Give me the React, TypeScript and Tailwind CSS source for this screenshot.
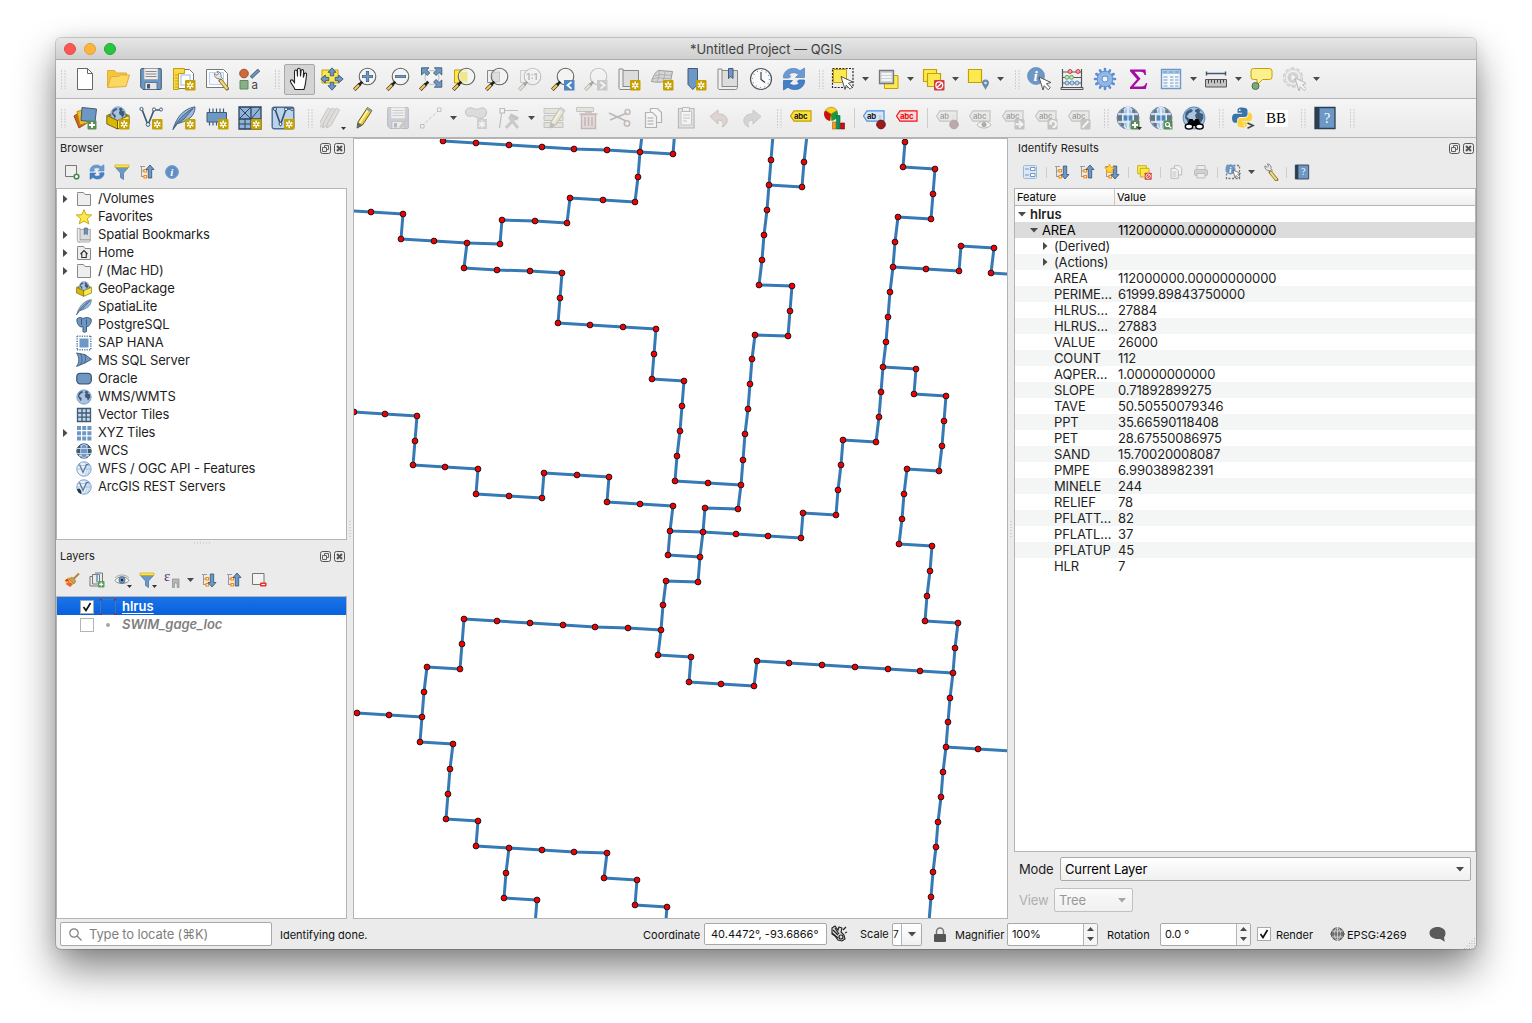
import React from "react";

type IconProps = { s?: number; children?: React.ReactNode; dim?: boolean; vb?: string };

const Svg = ({ s = 24, children, dim, vb = "0 0 24 24" }: IconProps) => (
  <svg width={s} height={s} viewBox={vb} fill="none" className={dim ? "shrink-0 opacity-35 grayscale-[60%]" : "shrink-0"}>
    {children}
  </svg>
);

const B = "#6d97c4";
const D = "#415a75";

/* Small golden "new item" badge */
const NewBadge = () => (
  <g>
    <rect x="13" y="13" width="10.5" height="10.5" rx="1" fill="#c4a000" />
    <path d="M18.2 14.6v7.4M15 16.5l6.4 3.6M21.4 16.5L15 20.1" stroke="#fff" strokeWidth="1.5" />
    <circle cx="18.2" cy="18.3" r="1" fill="#c4a000" />
  </g>
);
const PlusBadge = () => (
  <g>
    <rect x="14.5" y="14.5" width="9" height="9" rx="1" fill="#5a8c5a" />
    <path d="M19 16v6M16 19h6" stroke="#fff" strokeWidth="1.8" />
  </g>
);
const Handle = () => (
  <g>
    <path d="M1.2 22.8L7 17" stroke="#3b3b3b" strokeWidth="3.600" />
    <path d="M1.500 22.500L6.200 17.800" stroke="#fcc93f" strokeWidth="2.200" />
    <path d="M6 18L9.300 14.700" stroke="#222" strokeWidth="2.600" />
  </g>
);
const Cursor = ({ t = "translate(11 10)" }: { t?: string }) => (
  <path transform={t} d="M0 0l12 5.500-4.600 1.200 3.800 4-2 2-4-4L4 13z" fill="#fff" stroke="#555" strokeWidth="1" />
);
const GlobeBase = ({ land = D }: { land?: string }) => (
  <g>
    <circle cx="12" cy="12" r="10.800" fill="#a9c4e2" stroke={B} strokeWidth="1.200" />
    <path d="M3.500 7c1.500-2 3.500-3.500 5.500-4l2 1.500-2 2-2 .5-1 2-1.500 1 1.500 2 2 1 .5 2-1 3c-1.500 0-2-2-2.500-3.500L3 12zM13 4l3-1.500 3 2.500-2 1 1.500 1 2.500 1 .5 4-2 3.500-1.500 2-1.500-3.500-2.500-1.500-1-3.500 2-2-2-1.500z" fill={land} />
  </g>
);
const WireGlobe = ({ s = 24, children }: { s?: number; children?: React.ReactNode }) => (
  <Svg s={s}>
    <circle cx="12" cy="12" r="11" fill="#6d97c4" stroke="#7c8a99" strokeWidth="1" />
    <ellipse cx="12" cy="12" rx="5.500" ry="11" fill="#a9c8ea" stroke="#e4eef8" strokeWidth="1.200" />
    <path d="M12 1v22M2 8h20M2 16h20" stroke="#e6eef7" strokeWidth="1.300" />
    <path d="M1.500 9.500h4.500v5H1.500zM18 9.500h4.500v5H18zM5 4h3v3H5zM16 4h3v3h-3zM5 17h3v3H5z" fill="#6a6a6a" opacity=".75" />
    <path d="M7.800 9.500h8.400v5H7.800z" fill="#4f86c0" />
    <path d="M12 1v22" stroke="#e6eef7" strokeWidth="1.200" />
    {children}
  </Svg>
);

const NewDoc = () => (
  <Svg><path d="M4.500 1.500h10l5 5v16h-15z" fill="#fff" stroke="#666" /><path d="M14.500 1.500v5h5" stroke="#666" /></Svg>
);
const Open = () => (
  <Svg>
    <path d="M1.500 20V3.500h7l2 2.500h10v4" fill="#f5c542" stroke="#dfae35" />
    <path d="M1.500 20.500L5 9.500h7.500l1.500-1.500h9.500L20 19.500z" fill="#fcd860" stroke="#dfae35" />
  </Svg>
);
const Save = ({ dim }: { dim?: boolean }) => (
  <Svg dim={dim}>
    <path d="M2.500 1.500h19a.8.8 0 01.8.8v19.400a.8.8 0 01-.8.8H4L1.700 20V2.300z" fill={B} stroke={D} />
    <path d="M5 1.500h14v11H5z" fill="#eee" stroke="#999" strokeWidth=".6" />
    <path d="M6.500 4.500h11M6.500 7h11M6.500 9.500h11" stroke="#888" />
    <path d="M6 15.500h12v7H6z" fill="#e6e6e6" stroke={D} strokeWidth=".7" /><path d="M8 17h3v4.500H8z" fill={D} />
    {dim && <path d="M14 22l7-9" stroke="#a77" strokeWidth="3" />}
  </Svg>
);
const NewLayout = () => (
  <Svg>
    <path d="M4 2.500h13.500l4 4v15H4z" fill="#fff" stroke="#777" />
    <path d="M9 8h9v10H9z" stroke="#b9cff0" strokeWidth="1.500" />
    <path d="M1.500 1.500h11v5h-6v16h-5z" fill="#f9d84f" stroke="#c4a000" />
    <path d="M3 8h3M3 11h3M3 14h3M3 17h3M3 20h3" stroke="#c4a000" strokeWidth=".9" />
    <NewBadge />
  </Svg>
);
const Wrench = () => (
  <g>
    <path d="M9.500 6.500a4 4 0 004.500 5l1.500 2 2-2-1.500-1.800a4 4 0 00-4-5.200l1.500 2.300-1.500 1.500z" fill="#e8e8e8" stroke="#777" strokeWidth=".9" />
    <path d="M15.500 13.500l6.500 8" stroke="#8a7530" strokeWidth="4" strokeLinecap="round" />
    <path d="M16 14l5.500 7" stroke="#f0d878" strokeWidth="2.400" strokeLinecap="round" />
  </g>
);
const LayoutMgr = () => (
  <Svg>
    <path d="M1.500 2.500h17l4 4v14h-21z" fill="#fff" stroke="#777" /><path d="M4.500 5.500h14v12h-14z" fill="#f5f9ff" stroke="#b9cff0" />
    <Wrench />
  </Svg>
);
const StyleMgr = () => (
  <Svg>
    <circle cx="6" cy="6.500" r="4.300" fill="#ce6a3b" stroke="#a04c22" />
    <path d="M13 10.500L21 3" stroke={D} strokeWidth="3.400" /><path d="M13.500 10L20.500 3.500" stroke={B} strokeWidth="2" />
    <path d="M2 13.500h8v8.500H2z" fill="#8aad8a" stroke="#5a8c5a" />
    <text x="13.500" y="21.500" fontSize="11.500" fill="#444" fontFamily="Inter">a</text>
  </Svg>
);
const Hand = () => (
  <Svg>
    <path d="M8 22.500c-1-3-3.500-5-4.500-8-.5-1.600 1.500-2.200 2.500-.8l1.500 2V4.500c0-2 2.500-2 2.700 0l.3 5V2.800c0-2 2.700-2 2.800 0l.2 6.700.6-5.700c.2-1.800 2.600-1.500 2.500.3l-.3 6.400 1-3.500c.5-1.600 2.600-1 2.300.7-.8 5-.6 9-2.600 14.800z" fill="#fff" stroke="#222" strokeWidth="1.100" />
  </Svg>
);
const PanSel = () => (
  <Svg>
    <path d="M2 3h16v13H2z" fill="#fce94f" stroke="#c4a000" />
    <g fill={B} stroke={D} strokeWidth=".9">
      <path d="M12 .8l4 4.500h-2.300v3.500h-3.400V5.300H8zM12 23.200l4-4.500h-2.300v-3.500h-3.400v3.500H8zM.8 12l4.500-4v2.300h3.500v3.400H5.300V16zM23.200 12l-4.500-4v2.300h-3.500v3.400h3.500V16z" />
    </g>
  </Svg>
);
const Lens = ({ children, r = 8.300 }: { children?: React.ReactNode; r?: number }) => (
  <g>
    <circle cx="14.500" cy="9.500" r={r} fill="#f4f4f2" fillOpacity=".85" stroke="#666" strokeWidth="1.100" />
    {children}
    <Handle />
  </g>
);
const ZoomIn = () => (<Svg><Lens><path d="M14.500 4v11M9 9.500h11" stroke={D} strokeWidth="3.200" /><path d="M14.500 4.500v10M9.500 9.500h10" stroke={B} strokeWidth="2" /></Lens></Svg>);
const ZoomOut = () => (<Svg><Lens><path d="M9 9.500h11" stroke={D} strokeWidth="3.200" /><path d="M9.500 9.500h10" stroke={B} strokeWidth="2" /></Lens></Svg>);
const ZoomFull = () => (
  <Svg>
    <circle cx="13" cy="10.500" r="7" fill="#f4f4f2" stroke="#bbb" />
    <g fill={B} stroke={D} strokeWidth=".9">
      <path d="M2.500.8h7.500L7.700 3l3 3-2.500 2.500-3-3L2.500 8zM22.800.8h-7.500L17.600 3l-3 3 2.500 2.500 3-3L22.800 8zM22.800 20.200h-7.500l2.300-2.200-3-3 2.500-2.500 3 3 2.700-2.500z" />
    </g>
    <Handle />
  </Svg>
);
const ZoomSel = () => (<Svg><path d="M2.500 3h12v13h-12z" fill="#fce94f" stroke="#c4a000" /><Lens><path d="M8 5h7.500v9.500H9.500C7 12 7 8 8 5z" fill="#f0e68a" /></Lens></Svg>);
const ZoomLayer = () => (<Svg><path d="M2.500 3.500h12v12h-12z" fill="#eee" stroke="#888" /><Lens><path d="M8 5h6.500v9.500H9.500C7 12 7 8 8 5z" fill="#ddd" stroke="#aaa" strokeWidth=".5" /></Lens></Svg>);
const ZoomNative = () => (<Svg dim><path d="M2.500 3.500h12v12h-12z" fill="#eee" stroke="#888" /><Lens><text x="8.300" y="13" fontSize="9.500" fontWeight="700" fill="#555" fontFamily="Inter">1:1</text></Lens></Svg>);
const ZoomPrev = ({ next }: { next?: boolean }) => (
  <Svg dim={next}>
    <Lens />
    <path d="M13 13h10.500v10.500H13z" fill={next ? "#888" : "#4f86c0"} />
    {next ? <path d="M16.500 15l4 3.300-4 3.300" stroke="#fff" strokeWidth="1.800" /> : <path d="M20.500 15l-4 3.300 4 3.300" stroke="#fff" strokeWidth="1.800" />}
  </Svg>
);
const Scroll = ({ bm }: { bm?: boolean }) => (
  <g>
    <path d="M4.500 3.500h17v16h-17z" fill="#dcdcdc" stroke="#888" />
    <path d="M2 2h4v20.500H3.500C2 22.500 2 21 2 20z" fill="#f0f0f0" stroke="#888" />
    <path d="M3 22.500h16.500c1.500 0 2-1 2-3H6" fill="#eee" stroke="#888" />
    {bm && <path d="M12.500 1.500h4.500v10l-2.200-2-2.300 2z" fill={B} stroke={D} />}
  </g>
);
const MapNew = () => (<Svg><Scroll /><NewBadge /></Svg>);
const Map3d = () => (
  <Svg><path d="M1.500 14.500c1-4 4-10 7-11l14 1-2 10c-5-1-10 2-19 0z" fill="#d6d6d6" stroke="#999" /><path d="M5 9c6-3 10 0 16-1M9 4c1 4-1 8-2 11M15 4.500c0 4-1 6-2 10M3 12c7-3 11 1 17-1" stroke="#a5a5a5" strokeWidth=".8" /><NewBadge /></Svg>
);
const BmNew = () => (<Svg><path d="M5 1.500h9.500v16l-4.700 5-4.800-5z" fill={B} stroke={D} /><NewBadge /></Svg>);
const BmShow = ({ s }: { s?: number }) => (<Svg s={s}><Scroll bm /></Svg>);
const Clock = () => (
  <Svg><circle cx="12" cy="12" r="10.500" fill="#fafafa" stroke="#555" strokeWidth="1.200" /><circle cx="12" cy="12" r="8.500" stroke={B} strokeWidth="1.200" strokeDasharray="1 3.450" /><path d="M12 5v7.500l4 3" stroke="#333" strokeWidth="1.100" /></Svg>
);
const Refresh = ({ s }: { s?: number }) => (
  <Svg s={s}>
    <path d="M1.500 11V8.500C3 3 8 1 12.500 1.500c2 .2 4 1 5.500 2.300L22.500 1v9.500h-9l3-3C13 4.500 8 5.500 6.500 8.500c2.500-.5 3 2 0 2.500z" fill="#6b9ad2" stroke="#5a8ac0" strokeWidth=".8" />
    <path d="M22.500 13v2.500C21 21 16 23 11.500 22.500c-2-.2-4-1-5.500-2.300L1.500 23v-9.500h9l-3 3c3.500 3 8.500 2 10-1-2.500.5-3-2 0-2.500z" fill="#4480c8" stroke="#3a70b0" strokeWidth=".8" />
  </Svg>
);
const SelectRect = () => (
  <Svg><path d="M1.500 1.500h20.500v19h-20.500z" stroke="#222" strokeDasharray="2 1.300" strokeWidth="1.200" /><path d="M2.500 2.500h13v13h-13z" fill="#fce94f" stroke="#c4a000" /><Cursor t="translate(10 9.500)" /></Svg>
);
const SelForm = () => (
  <Svg><path d="M8.500 8.500h13.500v13H8.500z" fill="#fce94f" stroke="#c4a000" /><path d="M3.500 3.500h14v13h-14z" fill="#cdd2d9" stroke="#777" strokeWidth="1.300" /><path d="M5.500 7h10M5.500 10h10M5.500 13h10" stroke="#fff" strokeWidth="1.600" /></Svg>
);
const Desel = ({ s }: { s?: number }) => (
  <Svg s={s}>
    <path d="M2.500 2.500h13v12h-13z" fill="#fce94f" stroke="#c4a000" strokeWidth="1.200" /><path d="M6.500 6.500h13v13h-13z" fill="#fce94f" stroke="#c4a000" strokeWidth="1.200" />
    <rect x="13" y="13" width="10.500" height="10.500" rx="1" fill="#d63b3b" /><circle cx="18.300" cy="18.300" r="3.400" stroke="#fff" strokeWidth="1.300" /><path d="M16 20.500l4.500-4.500" stroke="#fff" strokeWidth="1.300" />
  </Svg>
);
const SelLoc = () => (
  <Svg><path d="M2.500 2.500h13v13h-13z" fill="#fce94f" stroke="#c4a000" strokeWidth="1.200" /><path d="M19.500 23c-1-3-3.500-4.500-3.500-7a3.500 3.500 0 017 0c0 2.500-2.500 4-3.500 7z" fill="#6b8ca8" /><circle cx="19.500" cy="16" r="1.300" fill="#dfe8f0" /></Svg>
);
const Identify = () => (
  <Svg><circle cx="9" cy="9" r="8.500" fill={B} stroke="#4f7fb5" strokeWidth=".6" /><text x="6.500" y="14" fontSize="15" fontWeight="700" fontStyle="italic" fill="#fff" fontFamily="Liberation Serif">i</text><Cursor t="translate(12 10)" /></Svg>
);
const Abacus = () => (
  <Svg>
    <path d="M2.500 2v19M21.500 2v19M2.500 5h19M2.500 10.500h19M2.500 16h19" stroke="#555" strokeWidth="1.200" /><path d="M1 20.500h22v2H1z" fill="#ddd" stroke="#555" />
    <g strokeWidth=".9"><g fill="#f3a0a0" stroke="#c03030"><circle cx="10" cy="4.500" r="2" /><circle cx="18" cy="4.500" r="2" /></g><g fill="#bfe3bf" stroke="#5a9c5a"><circle cx="7" cy="10.300" r="2" /><circle cx="11.500" cy="10.300" r="2" /></g><g fill="#bcd6f2" stroke="#4f7fb5"><circle cx="7" cy="16" r="2" /><circle cx="12" cy="16" r="2" /><circle cx="17" cy="16" r="2" /></g></g>
  </Svg>
);
const Gear = () => (
  <Svg>
    {[0, 30, 60, 90, 120, 150].map((a) => (
      <path key={a} transform={`rotate(${a} 12 12)`} d="M12 2v20" stroke="#5b8fd0" strokeWidth="2.600" strokeLinecap="round" />
    ))}
    <circle cx="12" cy="12" r="7.800" fill="#93b7e4" stroke="#5b8fd0" strokeWidth=".9" /><circle cx="12" cy="12" r="3" fill="#eef3fa" stroke="#5b8fd0" />
  </Svg>
);
const Sigma = () => (<Svg><path d="M4 2.500h15.500l.5 5.500h-1.500c-.5-2.500-1.500-3.200-4-3.200H8.500l6 7-7 7.700h8c2.500 0 3.500-1 4.500-3.500h1.200L19.800 22H4v-1.800l7-8-7-8z" fill="#a30ba3" /></Svg>);
const Table = () => (
  <Svg><path d="M2.500 2.500h19v19h-19z" fill="#f4f8fd" stroke={B} strokeWidth="1.400" /><path d="M3 3h18v4H3z" fill="#a9c8e8" /><path d="M4 5h4M10 5h4M16 5h4M4.500 10h4M11 10h3.500M16 10h3.500M4.500 13h4M11 13h3.500M16 13h3.500M4.500 16h4M11 16h3.500M16 16h3.500M4.500 19h4M11 19h3.500M16 19h3.500" stroke={B} strokeWidth="1.200" /></Svg>
);
const Ruler = () => (
  <Svg><path d="M2 6.500h20M2.500 4.500v4M21.500 4.500v4" stroke={D} strokeWidth="1.500" /><path d="M1.500 12.500h21v7.500h-21z" fill="#c4c4c4" stroke="#555" /><path d="M4.500 12.500v4M7.500 12.500v3M10.500 12.500v4M13.500 12.500v3M16.500 12.500v4M19.500 12.500v3" stroke="#444" /></Svg>
);
const Tip = () => (
  <Svg><path d="M4.500 1.500h16a2.500 2.500 0 012.500 2.500v6a2.500 2.500 0 01-2.500 2.500h-7L8 18v-5.500H4.500A2.500 2.500 0 012 10V4a2.500 2.500 0 012.500-2.500z" fill="#fcf08e" stroke="#c4a000" /><circle cx="6.500" cy="19" r="3.500" fill="#7aaa7a" stroke="#47714a" /></Svg>
);
const RunAct = () => (
  <Svg dim><circle cx="11" cy="10.500" r="9.500" stroke="#888" strokeDasharray="4 2" strokeWidth="1.300" /><circle cx="11" cy="10.500" r="8" fill="#eee" stroke="#888" /><circle cx="11" cy="10.500" r="5.500" fill="#999" /><path d="M9.500 7.500l4.500 3-4.500 3z" fill="#fff" /><Cursor t="translate(13 11)" /></Svg>
);

const AddLayer = () => (
  <Svg><path d="M1 10l8-5 5 12-8 5z" fill="#d0602a" stroke="#a04818" /><path d="M4 5.500l10-2.500 3 13-10 3z" fill="#f0c020" stroke="#b88a00" /><path d="M9 1.500l14.500 1.500-1.500 13-14-1.500z" fill={B} stroke={D} /><PlusBadge /></Svg>
);
const GeoPkg = ({ s, badge }: { s?: number; badge?: boolean }) => (
  <Svg s={s}>
    <path d="M1 9l11-5 11 5-11 5z" fill="#8a7000" /><g transform="translate(4 0) scale(.68)"><GlobeBase /></g>
    <path d="M.8 9.500L11.500 14.500v8.500L.8 18z" fill="#d8b800" stroke="#5c4a00" strokeWidth=".8" /><path d="M23.200 9.500L11.500 14.500v8.500l11.700-5z" fill="#fbe94a" stroke="#5c4a00" strokeWidth=".8" />
    {badge && <NewBadge />}
  </Svg>
);
const VNew = () => (
  <Svg><path d="M3 3.500l6 15.500 6-15h7" stroke="#3f5a73" strokeWidth="1.700" /><g fill="#fff" stroke="#3f5a73" strokeWidth="1"><circle cx="2.500" cy="3" r="1.600" /><circle cx="9" cy="18.500" r="1.800" /><circle cx="15" cy="3.500" r="1.600" /><circle cx="22" cy="3.500" r="1.500" /></g><NewBadge /></Svg>
);
const Feather = ({ s, badge }: { s?: number; badge?: boolean }) => (
  <Svg s={s}><path d="M1 23.500C4 13 10 3 23 .8c.3 4-2 9-5 11.200-4 3-8 4.500-12.500 5.500" fill="#9dbce0" stroke={D} strokeWidth=".9" /><path d="M1 23.500C5 15 12 7 21 2.500L12 13l-6.500 4.500z" fill={B} stroke={D} strokeWidth=".9" />{badge && <NewBadge />}</Svg>
);
const Chip = () => (
  <Svg><path d="M4.500 2.500v17M8 2.500v17M11.500 2.500v17M15 2.500v17M18.500 2.500v17" stroke="#3f5a73" strokeWidth="1.200" /><path d="M2 6.500h19.500v9.500H2z" fill={B} stroke={D} /><NewBadge /></Svg>
);
const Mesh = () => (
  <Svg><path d="M1 1h22v22H1z" fill="#8fb2da" stroke="#2d4258" strokeWidth="1.300" /><path d="M13 1v22M1 13h22" stroke="#2d4258" strokeWidth="1.300" /><path d="M1 1l12 12M13 1L1 13M23 1L13 13M7 13v10M1 18h12" stroke="#2d4258" strokeWidth="1" /><NewBadge /></Svg>
);
const VirtNew = () => (
  <Svg><rect x="1.200" y="1.200" width="21.600" height="21.600" rx="2" fill="#bcd3ec" stroke="#4a6d92" strokeWidth="1.400" /><path d="M4 3l5.500 15.500L15 3h6" stroke="#34506c" strokeWidth="1.600" /><g fill="#fff" stroke="#34506c"><circle cx="4" cy="3" r="1.500" /><circle cx="9.500" cy="18" r="1.500" /><circle cx="15" cy="3.200" r="1.500" /><circle cx="21" cy="3.200" r="1.300" /></g><NewBadge /></Svg>
);
const PencilShape = ({ t }: { t?: string }) => (
  <g transform={t}>
    <path d="M4 22l1-6L14.500 1.500l4.500 3L9.500 19z" fill="#f0d030" stroke="#5a5a40" strokeWidth="1" /><path d="M6.500 17L16 2.500" stroke="#fff7b0" strokeWidth="1.500" /><path d="M4 22.500l1-6 4.500 2.500z" fill="#666" /><path d="M13.300 3.500l4.500 3 1.200-2-4.500-3z" fill="#9a9a9a" />
  </g>
);
const Pencil = () => (<Svg><PencilShape /></Svg>);
const Pencils = () => (
  <Svg dim>{[-3, 1, 5].map((x) => (<path key={x} transform={`translate(${x} 0)`} d="M1.500 22l1-5L11 2l3.500 2L6 19.500z" fill="#cba" stroke="#777" />))}</Svg>
);
const AddLine = () => (<Svg dim><path d="M3 20L20 4" stroke="#777" strokeDasharray="3 2" /><path d="M1.500 18.500h3.500v3.500H1.500zM18.500 2h3.500v3.500h-3.500z" fill="#fff" stroke="#666" /></Svg>);
const Blob = () => (<Svg dim><path d="M1.500 6c0-4 5-5 8-3.500s5 .5 8-.5 5.500 2 5 5-3 6-7 5.500-5-3.500-8-2.500-6 0-6-4z" fill="#aba" stroke="#666" /><g><path d="M13 13h10v10H13z" fill="#998" /><path d="M18 14.500v7M15 16.500l6 3.500M21 16.500L15 20" stroke="#fff" strokeWidth="1.500" /></g></Svg>);
const Vertex = () => (<Svg dim><path d="M2.500 22L5 4.500h16" stroke="#666" strokeWidth="1.200" /><path d="M3 2.500h4.500V7H3z" fill="#fff" stroke="#555" strokeWidth="1.200" /><path d="M9 22l9-10M12 11l9 11" stroke="#887" strokeWidth="3" /><path d="M13 9l8 4" stroke="#776" strokeWidth="4" /></Svg>);
const ModAttr = () => (<Svg dim><path d="M2 2.500h19v5H2zM2 9.500h19v5H2zM2 16.500h19v5H2z" fill="#cca" stroke="#776" /><PencilShape t="translate(4 0)" /></Svg>);
const Trash = () => (<Svg dim><path d="M1.500 1.500h17v4h-17z" fill="#cca" stroke="#776" /><path d="M6.500 8.500h14v14h-14zM4.500 8h18M10 6h7" fill="#dbb" stroke="#b44" strokeWidth="1.500" /><path d="M10 11v9M13.500 11v9M17 11v9" stroke="#b44" strokeWidth="1.600" /></Svg>);
const Cut = () => (<Svg dim><path d="M1 7l17 8M2 14l17-7" stroke="#555" strokeWidth="1.600" /><circle cx="19.500" cy="6" r="2.500" stroke="#b44" strokeWidth="1.500" /><circle cx="19" cy="17.500" r="2.700" stroke="#b44" strokeWidth="1.500" /></Svg>);
const Copy = ({ s }: { s?: number }) => (<Svg s={s} dim><path d="M9.500 2.500h7l4 4v10h-11z" fill="#fff" stroke="#444" strokeWidth="1.200" /><path d="M4.500 6.500h7l4 4v11h-11z" fill="#fff" stroke="#444" strokeWidth="1.200" /><path d="M6.500 12h6M6.500 15h6M6.500 18h6" stroke="#666" strokeWidth="1.300" /></Svg>);
const Paste = () => (<Svg dim><path d="M4.500 2.500h15.500v19.500H4.500z" fill="#ccc" stroke="#555" strokeWidth="1.200" /><path d="M7 5.500h10.500V19H7z" fill="#fff" stroke="#777" /><path d="M8.500 1.500h7v4h-7z" fill="#eee" stroke="#555" /><path d="M9 9h7M9 12h7M9 15h4" stroke="#777" strokeWidth="1.200" /></Svg>);
const Undo = ({ r }: { r?: boolean }) => (<Svg dim><g transform={r ? "translate(24 0) scale(-1 1)" : undefined}><path d="M3 10.500L11 4v4c6-.5 10 3 9 8-.5 2.500-2.500 4-5 5 2-3 1.500-7-4-7v4z" fill={r ? "#9a9" : "#d99"} stroke={r ? "#686" : "#b55"} /></g></Svg>);

const Label = ({ fill, stroke, txt, color = "#222", dim, children }: { fill: string; stroke: string; txt: string; color?: string; dim?: boolean; children?: React.ReactNode }) => (
  <Svg dim={dim}>
    <path d="M1.500 10l3.500-5.200h17v10.400H5z" fill={fill} stroke={stroke} strokeWidth="1.200" />
    <text x="5" y="12.500" fontSize="7.800" fontWeight="700" fill={color} fontFamily="Inter" letterSpacing="-.2">{txt}</text>
    {children}
  </Svg>
);
const Pin = () => (<g><path d="M18 16V9" stroke="#ccc" strokeWidth="2.400" /><circle cx="19" cy="18.500" r="4.300" fill="#9c1c1c" stroke="#6a1010" /></g>);
const DimBadge = ({ d }: { d: string }) => (<g><rect x="13.500" y="13" width="10" height="10.500" rx="1" fill="#777" /><path d={d} stroke="#fff" strokeWidth="1.900" /></g>);
const Diagram = () => (
  <Svg><circle cx="9" cy="8" r="6.500" fill="#f5c211" /><path d="M9 8L3 4.500A7 7 0 008 15z" fill="#cc1010" /><path d="M9 8l6-3.500a7 7 0 01-5.500 10.500z" fill="#1d9a3c" /><path d="M9 8L3.500 4A7 7 0 0115 4.500z" fill="#fbd31c" stroke="#8a7000" strokeWidth=".5" /><path d="M10.500 16h3.500v7h-3.500z" fill="#f8a01c" stroke="#a06000" strokeWidth=".6" /><path d="M14.500 9.500h3.500V23h-3.500z" fill="#12915c" stroke="#064" strokeWidth=".6" /><path d="M18.500 17h4v6h-4z" fill="#c11" stroke="#700" strokeWidth=".6" /></Svg>
);
const Binoc = () => (
  <Svg><GlobeBase /><path d="M4.500 20l3-7h3l1.500 2 1.500-2h3l3 7z" fill="#000" /><g fill="#fff" stroke="#000" strokeWidth="1.400"><ellipse cx="7" cy="20.500" rx="3.700" ry="2.500" /><ellipse cx="17.500" cy="20.500" rx="3.700" ry="2.500" /></g></Svg>
);
const Python = () => (
  <Svg>
    <path d="M10.800 1.500c-4 0-4.300 1.700-4.300 3v2.300h4.700v.9H4.300C2.500 7.700 1 9 1 12.200s1.500 4.600 3 4.600h2v-2.600c0-1.900 1.500-3.300 3.300-3.300h4.500c1.500 0 2.700-1.200 2.700-2.700V4.500c0-2-1.700-3-5.700-3z" fill="#3775a9" />
    <path d="M11.300 21.500c4 0 4.500-1.700 4.500-3v-2.300h-4.700v-.9H18c2 0 3.200-1.400 3.200-4.500S19.500 6.500 18 6.500h-.7v2.300c0 1.900-1.500 3.300-3.300 3.300H9.200c-1.500 0-2.700 1.200-2.700 2.700v3.700c0 2 1.700 3 4.800 3z" fill="#fcd33b" />
    <circle cx="8.700" cy="4.200" r=".9" fill="#fff" /><circle cx="13.300" cy="19" r=".8" fill="#fff" /><path d="M16.500 17l5.500 2.600-5.500 2.600" stroke="#444" strokeWidth="1.600" />
  </Svg>
);
const Help = ({ s }: { s?: number }) => (
  <Svg s={s}><path d="M2 1.500h20v21H2z" fill={B} stroke="#2d3e50" strokeWidth="1.300" /><path d="M2 1.500h4.500v21H2z" fill="#2d3e50" /><text x="11" y="16.500" fontSize="14" fill="#fff" fontFamily="Liberation Serif">?</text></Svg>
);

/* 16px panel icons */
const P = ({ children }: { children: React.ReactNode }) => (<svg width="16" height="16" viewBox="0 0 16 16" fill="none" className="shrink-0 overflow-visible">{children}</svg>);
const AddSel = () => (<P><path d="M1.500 1.500h11v11h-11z" stroke="#77776c" fill="#efefef" /><circle cx="12.500" cy="12.500" r="2.300" fill="#fff" stroke="#3f8a4f" strokeWidth="1.600" /></P>);
const Funnel = () => (<P><path d="M1.500 3.500h13l-5 5.500v6.500l-3-2V9z" fill={B} stroke="#4c78a8" strokeWidth=".8" /><path d="M1 1h14v2.500H1z" fill="#fce94f" stroke="#c4a000" strokeWidth=".6" /></P>);
const TreeDots = () => (<g><path d="M1 2.500h5M2.500 2.500V13M2.500 7h3M2.500 12.500h3" stroke="#999" /><path d="M5 5.500h2.500V8H5zM5 11.500h2.500V14H5z" fill="#fff" stroke="#f80" strokeWidth="1.200" /></g>);
const TreeUp = () => (<P><TreeDots /><path d="M11 1l4 4.500h-2.300V14H9.300V5.500H7z" fill={B} stroke="#30527a" strokeWidth=".8" /></P>);
const TreeDown = ({ star }: { star?: boolean }) => (
  <P><TreeDots /><path d="M11 15l4-4.500h-2.300V2H9.300v8.500H7z" fill={B} stroke="#30527a" strokeWidth=".8" />{star && <path d="M5.500 0l1.500 3.300 3.300.4-2.400 2.300.6 3.300-3-1.600-3 1.600.6-3.300L.7 3.700 4 3.300z" fill="#fcd93a" stroke="#f90" strokeWidth=".8" />}</P>
);
const Info = () => (<P><circle cx="8" cy="8" r="6.500" fill="#5f8fc4" stroke="#7ea6d0" /><text x="6.300" y="11.800" fontSize="11" fontWeight="700" fontStyle="italic" fill="#fff" fontFamily="Liberation Serif">i</text></P>);
const Brush = () => (<P><path d="M1 8l4-3 6 5-4 4.500-5-2z" fill="#f0c030" /><path d="M.5 9l3-2.500 2 3z" fill="#d33" /><path d="M2 12l4 3 3-3-4-2z" fill="#e8604a" /><path d="M5 7l5 5 2-3-4-4z" fill="#c9a05a" stroke="#8a6020" strokeWidth=".5" /><path d="M9.500 7L15 1.500" stroke="#b8803a" strokeWidth="2" /></P>);
const AddGroup = () => (<P><path d="M1 4.500h3M1 4.500V14h8M3.500 2.500h7V12h-7zM6 1h7.500v8" stroke="#777" /><path d="M8 1.500v9" stroke={B} strokeWidth="1.600" /><rect x="9" y="9" width="6.500" height="6.500" rx="1" fill="#5a9c5a" /><path d="M12.200 10.300v4M10.200 12.300h4" stroke="#fff" strokeWidth="1.200" /></P>);
const Eye = () => (<P><path d="M1 8.500c3-5 11-5 14 0-3 4-11 4-14 0z" fill="#fff" stroke="#888" /><circle cx="8" cy="8" r="3.200" fill={B} stroke={D} strokeWidth=".6" /><circle cx="8" cy="8" r="1.200" fill="#222" /><path d="M1 6c3-4 11-4 14 0" stroke="#aaa" /></P>);
const Eps = () => (<P><text x="0" y="8.500" fontSize="15" fill="#5a3070" fontFamily="Liberation Serif">ε</text><path d="M8.500 15.500V7h6.500v8.500h-1.800V11h-2.800v4.500z" fill="#b8b8b8" stroke="#888" strokeWidth=".7" /></P>);
const Remove = () => (<P><path d="M1.500 1.500h11.500v11H1.500z" stroke="#77776c" fill="#f3f3f3" /><rect x="9" y="10.500" width="6.500" height="4" rx="1" fill="#ef2929" /><path d="M10.500 12.500h3.500" stroke="#fff" strokeWidth="1.100" /></P>);
const FormIcon = () => (<P><rect x="1.500" y="1.500" width="13" height="13" rx="1" fill="#dce8f5" stroke="#9ab8da" /><path d="M3 5h4M3 11h4" stroke={B} /><path d="M8.500 3.500h4.500v3H8.500zM8.500 9.500h4.500v3H8.500z" fill="#fff" stroke={B} /></P>);
const Printer = () => (<P><g opacity=".55"><path d="M4 1.500h8v4H4z" fill="#eee" stroke="#999" /><rect x="1.500" y="5.500" width="13" height="6" rx="1.500" fill="#bbb" stroke="#999" /><path d="M4 9.500h8v4.500H4z" fill="#eee" stroke="#999" /></g></P>);
const SelInfo = () => (<P><path d="M1.500 1.500h13v13h-13z" stroke="#777" strokeDasharray="2 1.500" strokeWidth="1.300" /><circle cx="5.500" cy="5.500" r="5" fill={B} /><text x="4" y="8.500" fontSize="9" fontWeight="700" fontStyle="italic" fill="#fff" fontFamily="Liberation Serif">i</text><path d="M8 6l7.500 3.500-2.800.7 2.300 2.700-1.300 1.200-2.500-2.600-1.200 2.500z" fill="#fff" stroke="#555" strokeWidth=".7" /></P>);
const WrenchP = () => (<svg width="18" height="18" viewBox="6 3.500 18 19.500" fill="none" className="shrink-0"><Wrench /></svg>);

const Folder = ({ home }: { home?: boolean }) => (<P><path d="M1.500 2.500v-1h6l1.500 2h5.500v11h-13z" fill="#eee" stroke="#888" />{home && <path d="M4.500 9L8 5.500 11.500 9M5.800 8v4.500h4.500V8" stroke="#333" strokeWidth="1.100" />}</P>);
const Star = () => (<P><path d="M8 .6l2.100 5 5.500.4-4.200 3.500 1.400 5.400L8 12l-4.800 2.900 1.400-5.400L.4 6l5.500-.4z" fill="#fce94f" stroke="#c4a000" strokeWidth=".9" /></P>);
const Postgres = () => (<P><path d="M1 2c1-2 5-1.500 6-.5 2-1 6-1.500 8 .5 1 3-1 6-3 7.500L10.500 9v5.500c-1 1-3.500 1-3.500 0V9.500l-2 .5C2 9 .5 5 1 2z" fill={B} stroke={D} /><path d="M5.500 2v6M10.500 2.500V8" stroke={D} /></P>);
const Hana = () => (<P><path d="M3.500 3.500h9v9h-9z" fill={B} /><path d="M1 1.200h14M1 14.800h14M1.200 1v14M14.800 1v14" stroke="#5a7fa8" strokeWidth="1.600" strokeDasharray="1.200 1.200" /></P>);
const MsSql = () => (<P><path d="M.5 0l8.500 1.500 6.500 4.800L9 10 .5 13.500c3-4 3-9 0-13.500z" fill={B} stroke={D} strokeWidth=".9" /><path d="M4.500 1c2 4 2 7 0 10.500M8.500 1.500c1.500 3 1.500 5 0 8.500" stroke={D} strokeWidth=".8" /></P>);
const Oracle = () => (<P><rect x=".8" y="2.300" width="14.500" height="10.500" rx="3.500" fill={B} stroke={D} strokeWidth="1.300" /></P>);
const VT = () => (<P><path d="M1.500 1.500h13v13h-13zM6 1.500v13M10.200 1.500v13M1.500 6h13M1.500 10.200h13" fill="#c5d8ee" stroke="#3f5a73" strokeWidth="1.300" /></P>);
const XYZ = () => (<P><path d="M1 1h4v4H1zM6.200 1h4v4h-4zM11.400 1h4v4h-4zM1 6.200h4v4H1zM6.200 6.200h4v4h-4zM11.400 6.200h4v4h-4zM1 11.400h4v4H1zM6.200 11.400h4v4h-4zM11.400 11.400h4v4h-4z" fill={B} /></P>);
const Wcs = () => (<P><circle cx="8" cy="8" r="7.200" fill="#3f5a73" stroke={D} /><path d="M4.500 3h7M3 12.500h10" stroke="#bcd6f2" strokeWidth="2" /><ellipse cx="8" cy="8" rx="3.500" ry="7" fill={B} stroke="#cfe0f2" strokeWidth=".8" /><path d="M1 5.500h14M1 10.500h14" stroke="#cfe0f2" strokeWidth=".9" /></P>);
const Wfs = ({ land }: { land?: boolean }) => (<P><circle cx="8" cy="8" r="7.200" fill="#e8f1fb" stroke={B} strokeWidth=".9" /><path d="M8 1c4 4 4 10 0 14M1 8h14M2 4.500h12M11 2c3 4 3 8 0 12" stroke="#9dbce0" strokeWidth=".8" /><path d="M3.500 3.500l3.500 8 3.500-8h2" stroke="#5a7590" strokeWidth="1.200" />{land && <path d="M1 10l2.500-.5 1.500 2 .5 2-1 1.500-2.500-2z" fill="#23364a" />}</P>);

/* Toolbar primitives */
const Btn = ({ children, on }: { children: React.ReactNode; on?: boolean }) => (
  <div className="flex w-[33px] shrink-0 items-center justify-center">
    {on ? <div className="flex size-[31px] items-center justify-center rounded-[2px] border border-[#a8a8a8] bg-[#d4d4d4]">{children}</div> : children}
  </div>
);
const Tri = ({ cls = "w-3" }: { cls?: string }) => (
  <div className={`flex shrink-0 items-center justify-center ${cls}`}><svg width="7" height="4" viewBox="0 0 7 4"><path d="M0 0h7L3.500 4z" fill="#4a4a4a" /></svg></div>
);
const Grip = ({ first }: { first?: boolean }) => (
  <div className={first ? "flex w-[12.500px] shrink-0 items-center pl-[5px]" : "flex w-4 shrink-0 items-center pl-2"}>
    <svg width="5" height="19" viewBox="0 0 5 19"><path d="M.5.500v19M4 .500v19" stroke="#adadad" strokeWidth="1" strokeDasharray="1 2" /></svg>
  </div>
);
const Sep = () => <div className="flex w-[7px] shrink-0 items-center justify-center"><div className="h-5 w-px bg-[#cdcdcd]" /></div>;
const SepS = () => <div className="flex w-[7px] shrink-0 items-center justify-center"><div className="h-[11px] w-px bg-[#cdcdcd]" /></div>;
const SBtn = ({ children }: { children: React.ReactNode }) => <div className="flex w-[25px] shrink-0 items-center justify-center">{children}</div>;
const CornerTri = ({ children }: { children: React.ReactNode }) => (
  <div className="relative">{children}<svg width="5" height="3" viewBox="0 0 5 3" className="absolute -right-[2px] bottom-0"><path d="M0 0h5L2.500 3z" fill="#333" /></svg></div>
);

const PanelTitle = ({ title }: { title: string }) => (
  <div className="flex h-5 items-center pr-[2px] pl-1">
    <span className="text-[11px] tracking-[0.05px] text-[#222]">{title}</span>
    <div className="ml-auto flex gap-[3px]">
      <svg width="11" height="11" viewBox="0 0 11 11" fill="none" stroke="#555"><rect x=".5" y=".5" width="10" height="10" rx="2" /><path d="M4.500 4.500v-2h4v4h-2M2.500 4.500h4v4h-4z" strokeWidth=".9" /></svg>
      <svg width="11" height="11" viewBox="0 0 11 11" fill="none" stroke="#555"><rect x=".5" y=".5" width="10" height="10" rx="2" /><path d="M3 3l5 5M8 3L3 8" strokeWidth="2" /></svg>
    </div>
  </div>
);

const browserItems: { t: string; i: React.ReactNode; a?: boolean }[] = [
  { t: "/Volumes", i: <Folder />, a: true },
  { t: "Favorites", i: <Star /> },
  { t: "Spatial Bookmarks", i: <BmShow s={16} />, a: true },
  { t: "Home", i: <Folder home />, a: true },
  { t: "/ (Mac HD)", i: <Folder />, a: true },
  { t: "GeoPackage", i: <GeoPkg s={16} /> },
  { t: "SpatiaLite", i: <Feather s={16} /> },
  { t: "PostgreSQL", i: <Postgres /> },
  { t: "SAP HANA", i: <Hana /> },
  { t: "MS SQL Server", i: <MsSql /> },
  { t: "Oracle", i: <Oracle /> },
  { t: "WMS/WMTS", i: <Svg s={16}><GlobeBase /></Svg> },
  { t: "Vector Tiles", i: <VT /> },
  { t: "XYZ Tiles", i: <XYZ />, a: true },
  { t: "WCS", i: <Wcs /> },
  { t: "WFS / OGC API - Features", i: <Wfs /> },
  { t: "ArcGIS REST Servers", i: <Wfs land /> },
];

const attrs: [string, string][] = [
  ["AREA", "112000000.00000000000"], ["PERIME…", "61999.89843750000"], ["HLRUS…", "27884"], ["HLRUS…", "27883"],
  ["VALUE", "26000"], ["COUNT", "112"], ["AQPER…", "1.00000000000"], ["SLOPE", "0.71892899275"], ["TAVE", "50.50550079346"],
  ["PPT", "35.66590118408"], ["PET", "28.67550086975"], ["SAND", "15.70020008087"], ["PMPE", "6.99038982391"], ["MINELE", "244"],
  ["RELIEF", "78"], ["PFLATT…", "82"], ["PFLATL…", "37"], ["PFLATUP", "45"], ["HLR", "7"],
];

/* Polylines of the hlrus layer; every listed vertex carries a marker */
const lines: string[] = [
  "446,116 443,141 476,143 509,145 542,147 574,149 607,150 640,152 673,154 675,129",
  "643,127 640,152 638,177 635,202 603,200 570,198 567,223 535,221 502,220 500,244 467,243",
  "338,210 371,212 403,214 401,239 434,241 467,243",
  "467,243 464,268 497,270 530,271 562,273 560,298 558,323 590,325 623,327 656,329 654,354 652,379 684,381 682,406 680,431 677,456 675,481 708,483 741,485 738,509 705,508 703,532",
  "741,485 743,460 745,434 748,409 750,384 752,359 755,335 788,336 790,311 792,286 759,285 762,260 764,235 767,210 769,185 771,160 773,135",
  "769,185 802,187 804,162 807,135",
  "354,412 385,414 417,416 415,441 413,465 445,467 478,469 476,494 509,496 542,498 544,473 577,475 609,477 607,502 640,504 673,506 670,531 703,532 736,534 768,536 801,538 803,513 836,515 838,490 841,465 843,440 876,442 879,417 881,392 883,367 886,342 888,317 890,292 893,267 895,242 898,217 931,219 933,194 935,169 903,167 905,142 907,117",
  "893,267 926,269 959,271 961,246 994,248 991,273 1024,275",
  "883,367 916,369 914,394 946,396 944,421 942,446 939,471 907,469 904,494 902,519 899,544 932,546 930,571 927,596 925,621 958,623 955,648 953,673 950,698 948,722 946,747 943,772 941,797 938,822 936,847 933,872 931,897 929,922",
  "946,747 978,749 1011,751",
  "670,531 668,555 700,557 703,532",
  "700,557 698,582 666,581 663,605 661,630 658,655 691,657 689,682 721,684 754,686 757,661 789,663 822,665 855,667 888,669 920,671 953,673",
  "661,630 628,628 595,627 563,625 530,623 497,621 464,619 462,644 460,669 427,667 424,692 422,717 420,742 453,744 450,769 448,794 446,819 478,821 476,846 509,848 542,850 574,852 607,853 604,878 637,880 635,905 667,907 665,932",
  "422,717 389,715 357,713 324,711",
  "509,848 506,873 504,898 537,900 535,925",
];
const dots = Array.from(new Set(lines.flatMap((l) => l.split(" "))));

const Dots6 = () => <svg width="16" height="2" viewBox="0 0 16 2"><path d="M0 1h16" stroke="#bbb" strokeWidth="1" strokeDasharray="1 2" /></svg>;
const Spin = ({ v }: { v: string }) => (
  <div className="flex h-[23px] w-[91px] shrink-0 overflow-hidden rounded-[2px] border border-[#a9a9a9] bg-white text-[11px]">
    <span className="flex flex-1 items-center pt-px pl-1 tracking-[-0.1px]">{v}</span>
    <div className="flex w-[14px] flex-col items-center justify-around border-l border-[#b5b5b5] bg-[#f5f5f5]">
      <svg width="7" height="4" viewBox="0 0 7 4"><path d="M0 4h7L3.500 0z" fill="#4a4a4a" /></svg>
      <svg width="7" height="4" viewBox="0 0 7 4"><path d="M0 0h7L3.500 4z" fill="#4a4a4a" /></svg>
    </div>
  </div>
);
const Check = () => (
  <div className="flex size-[14px] shrink-0 items-center justify-center border border-[#a9a9a9] bg-white">
    <svg width="10" height="10" viewBox="0 0 10 10" fill="none"><path d="M1.500 5l2.500 3.500L8.500 1" stroke="#111" strokeWidth="1.700" /></svg>
  </div>
);

export default function App() {
  return (
    <div className="h-[1023px] w-[1532px] overflow-hidden bg-white pt-[38px] pl-14 font-['Inter',sans-serif] text-[#1e1e1e]">
      <div className="flex h-[911px] w-[1420px] flex-col overflow-hidden rounded-[5px] bg-[#ebebeb] shadow-[0_0_0_1px_rgba(0,0,0,0.16),0_20px_40px_rgba(0,0,0,0.48),0_2px_16px_rgba(0,0,0,0.1)]">
        <div className="relative flex h-[22px] shrink-0 items-center justify-center border-b border-[#ababab] bg-linear-to-b from-[#e6e6e6] to-[#cfcfcf]">
          <div className="absolute left-2 flex gap-2">
            <div className="size-3 rounded-full border border-[#e04b46] bg-[#fc5753]" />
            <div className="size-3 rounded-full border border-[#dfa033] bg-[#fdb53d]" />
            <div className="size-3 rounded-full border border-[#24a536] bg-[#2bc440]" />
          </div>
          <span className="pt-[2px] text-[13px] tracking-[-0.03px] text-[#404040]">*Untitled Project — QGIS</span>
        </div>

        <div className="flex h-[39px] shrink-0 border-b border-[#b4b4b4] bg-linear-to-b from-[#f5f5f5] to-[#eaeaea]">
          <Grip first />
          <Btn><NewDoc /></Btn><Btn><Open /></Btn><Btn><Save /></Btn><Btn><NewLayout /></Btn><Btn><LayoutMgr /></Btn><Btn><StyleMgr /></Btn>
          <Grip />
          <Btn on><Hand /></Btn><Btn><PanSel /></Btn><Btn><ZoomIn /></Btn><Btn><ZoomOut /></Btn><Btn><ZoomFull /></Btn><Btn><ZoomSel /></Btn><Btn><ZoomLayer /></Btn><Btn><ZoomNative /></Btn>
          <Btn><ZoomPrev /></Btn><Btn><ZoomPrev next /></Btn><Btn><MapNew /></Btn><Btn><Map3d /></Btn><Btn><BmNew /></Btn><Btn><BmShow /></Btn><Btn><Clock /></Btn><Btn><Refresh /></Btn>
          <Grip />
          <Btn><SelectRect /></Btn><Tri /><Btn><SelForm /></Btn><Tri /><Btn><Desel /></Btn><Tri /><Btn><SelLoc /></Btn><Tri />
          <Grip />
          <Btn><Identify /></Btn><Btn><Abacus /></Btn><Btn><Gear /></Btn><Btn><Sigma /></Btn><Btn><Table /></Btn><Tri /><Btn><Ruler /></Btn><Tri /><Btn><Tip /></Btn><Btn><RunAct /></Btn><Tri />
        </div>

        <div className="flex h-[39px] shrink-0 border-b border-[#b4b4b4] bg-linear-to-b from-[#f5f5f5] to-[#eaeaea]">
          <Grip first />
          <Btn><AddLayer /></Btn><Btn><GeoPkg badge /></Btn><Btn><VNew /></Btn><Btn><Feather badge /></Btn><Btn><Chip /></Btn><Btn><Mesh /></Btn><Btn><VirtNew /></Btn>
          <Grip />
          <Btn><CornerTri><Pencils /></CornerTri></Btn><Btn><Pencil /></Btn><Btn><Save dim /></Btn><Btn><AddLine /></Btn><Tri /><Btn><Blob /></Btn><Btn><Vertex /></Btn><Tri />
          <Btn><ModAttr /></Btn><Btn><Trash /></Btn><Btn><Cut /></Btn><Btn><Copy /></Btn><Btn><Paste /></Btn><Btn><Undo /></Btn><Btn><Undo r /></Btn>
          <Grip />
          <Btn><Label fill="#fbe13a" stroke="#c4a000" txt="abc" /></Btn><Btn><Diagram /></Btn>
          <Sep />
          <Btn><Label fill="#d5e8fb" stroke="#4a90e2" txt="ab"><Pin /></Label></Btn><Btn><Label fill="#ffd9d9" stroke="#f01010" txt="abc" color="#e01010" /></Btn>
          <Sep />
          <Btn><Label dim fill="#ddc" stroke="#776" txt="ab"><Pin /></Label></Btn>
          <Btn><Label dim fill="#ddc" stroke="#776" txt="abc"><path d="M9 19c3-5 11-5 14 0-3 4-11 4-14 0z" fill="#fff" stroke="#555" /><circle cx="16" cy="18.500" r="2.500" fill="#333" /></Label></Btn>
          <Btn><Label dim fill="#ddc" stroke="#776" txt="abc"><DimBadge d="M14.500 18.300h6M18 15l3.500 3.300L18 21.500" /></Label></Btn>
          <Btn><Label dim fill="#ddc" stroke="#776" txt="abc"><DimBadge d="M18.500 21a3 3 0 10-2.500-3.500l2 1" /></Label></Btn>
          <Btn><Label dim fill="#ddc" stroke="#776" txt="abc"><DimBadge d="M15.500 21.500l6-6.500" /></Label></Btn>
          <Grip />
          <Btn><CornerTri><WireGlobe><PlusBadge /></WireGlobe></CornerTri></Btn>
          <Btn><WireGlobe><rect x="14.500" y="14.500" width="9" height="9" rx="1" fill="#5a8c5a" /><circle cx="18.500" cy="18.500" r="2" stroke="#fff" strokeWidth="1.200" /><path d="M20 20l2.300 2.300" stroke="#fff" strokeWidth="1.300" /></WireGlobe></Btn>
          <Btn><Binoc /></Btn>
          <Grip />
          <Btn><Python /></Btn>
          <Btn><div className="flex h-[17px] w-[23px] items-center justify-center bg-white font-['Liberation_Serif',serif] text-[15px] text-black">BB</div></Btn>
          <Grip />
          <Btn><Help /></Btn>
          <Grip />
        </div>

        <div className="flex min-h-0 flex-1">
          <div className="flex w-[291px] shrink-0 flex-col">
            <PanelTitle title="Browser" />
            <div className="flex h-[30px] shrink-0 items-center pb-[2px] pl-[3px]">
              <SBtn><AddSel /></SBtn><SBtn><Refresh s={16} /></SBtn><SBtn><Funnel /></SBtn><SBtn><TreeUp /></SBtn><SBtn><Info /></SBtn>
            </div>
            <div className="h-[352px] shrink-0 border border-[#b4b4b4] bg-white pt-px">
              {browserItems.map((b) => (
                <div key={b.t} className="flex h-[18px] items-center pl-[6px]">
                  <div className="flex w-[13px] items-center">{b.a && <svg width="5" height="8" viewBox="0 0 5 8"><path d="M0 0v8l4.500-4z" fill="#4a4a4a" /></svg>}</div>
                  {b.i}
                  <span className="ml-[6px] text-[13px] tracking-[-0.15px] whitespace-nowrap">{b.t}</span>
                </div>
              ))}
            </div>
            <div className="flex h-[6px] items-center justify-center"><Dots6 /></div>
            <PanelTitle title="Layers" />
            <div className="flex h-[30px] shrink-0 items-center pb-[2px] pl-[3px]">
              <SBtn><Brush /></SBtn><SBtn><AddGroup /></SBtn><SBtn><CornerTri><Eye /></CornerTri></SBtn><SBtn><CornerTri><Funnel /></CornerTri></SBtn><SBtn><Eps /></SBtn><Tri cls="w-3" />
              <SBtn><TreeDown /></SBtn><SBtn><TreeUp /></SBtn><SBtn><Remove /></SBtn>
            </div>
            <div className="min-h-0 flex-1 border border-[#b4b4b4] bg-white text-[13px] font-semibold">
              <div className="flex h-[18px] items-center bg-linear-to-b from-[#1a74e8] to-[#0860dc] pt-px pl-[23px]">
                <Check />
                <svg width="16" height="16" viewBox="0 0 16 16" fill="none" className="ml-[6px]"><path d="M.5.5h15v15H.5z" stroke="#3778b8" /><path d="M0 0h2v1.500H0zM14 0h2v1.500h-2zM0 14.500h2V16H0zM14 14.500h2V16h-2z" fill="#c01030" /></svg>
                <span className="ml-[6px] text-white underline underline-offset-2">hlrus</span>
              </div>
              <div className="flex h-[18px] items-center pt-px pl-[23px]">
                <div className="size-[14px] border border-[#b4b4b4] bg-white" />
                <div className="mx-[12px] size-[4px] rounded-full bg-[#aaa69c]" />
                <span className="tracking-[-0.05px] text-[#808080] italic">SWIM_gage_loc</span>
              </div>
            </div>
          </div>

          <div className="flex w-[6px] shrink-0 items-center justify-center"><div className="rotate-90"><Dots6 /></div></div>

          <div className="w-[655px] shrink-0 border border-[#b4b4b4] bg-white">
            <svg width="653" height="779" viewBox="354 139 653 779" fill="none" className="block">
              {lines.map((l) => (<polyline key={l} points={l} stroke="#3579b5" strokeWidth="3" strokeLinejoin="round" />))}
              {dots.map((d) => {
                const [x, y] = d.split(",").map(Number);
                return <circle key={d} cx={x} cy={y} r="2.900" fill="#f00000" stroke="#26181a" strokeWidth="1" />;
              })}
            </svg>
          </div>

          <div className="flex w-[6px] shrink-0 items-center justify-center"><div className="rotate-90"><Dots6 /></div></div>

          <div className="flex min-w-0 flex-1 flex-col">
            <PanelTitle title="Identify Results" />
            <div className="flex h-[30px] shrink-0 items-center pb-[2px] pl-[3.500px]">
              <SBtn><FormIcon /></SBtn><SepS /><SBtn><TreeDown /></SBtn><SBtn><TreeUp /></SBtn><SBtn><TreeDown star /></SBtn><SepS /><SBtn><Desel s={16} /></SBtn><SepS /><SBtn><Copy s={16} /></SBtn><SBtn><Printer /></SBtn><SepS />
              <SBtn><SelInfo /></SBtn><Tri /><SBtn><WrenchP /></SBtn><SepS /><SBtn><Help s={16} /></SBtn>
            </div>
            <div className="flex h-[664px] shrink-0 flex-col border border-[#b4b4b4] bg-white">
              <div className="flex h-[17px] shrink-0 border-b border-[#b4b4b4] bg-linear-to-b from-white to-[#efefef] text-[11px] text-black">
                <div className="flex w-[100px] items-center border-r border-[#c8c8c8] pt-px pl-[2px]">Feature</div>
                <div className="flex items-center pt-px pl-[2px]">Value</div>
              </div>
              <div className="text-[13px] leading-4 tracking-[-0.13px]">
                <div className="flex h-4 items-center pl-[3px] font-semibold"><svg width="8" height="5" viewBox="0 0 8 5"><path d="M0 0h8L4 4.500z" fill="#4a4a4a" /></svg><span className="ml-1 tracking-normal">hlrus</span></div>
                <div className="flex h-4 items-center bg-[#dcdcdc] pl-[15px] text-black"><svg width="8" height="5" viewBox="0 0 8 5"><path d="M0 0h8L4 4.500z" fill="#4a4a4a" /></svg><span className="ml-1 w-[76px]">AREA</span><span>112000000.00000000000</span></div>
                {["(Derived)", "(Actions)"].map((t, i) => (
                  <div key={t} className={i ? "flex h-4 items-center bg-[#f4f5f5] pl-[28px]" : "flex h-4 items-center pl-[28px]"}><svg width="5" height="8" viewBox="0 0 5 8"><path d="M0 0v8l4.500-4z" fill="#4a4a4a" /></svg><span className="ml-[6px]">{t}</span></div>
                ))}
                {attrs.map(([k, v], i) => (
                  <div key={i} className={i % 2 ? "flex h-4 items-center bg-[#f4f5f5] pl-[39px]" : "flex h-4 items-center pl-[39px]"}>
                    <span className="w-16 whitespace-nowrap">{k}</span><span>{v}</span>
                  </div>
                ))}
              </div>
            </div>
            <div className="mt-[5px] flex items-center pl-[5px] text-[13px] tracking-[-0.15px]">
              <span className="w-[41px] pt-px">Mode</span>
              <div className="flex h-6 w-[411px] items-center rounded-[2px] border border-[#a9a9a9] bg-linear-to-b from-white to-[#f0f0f0] pr-[6px] pl-1 text-black"><span className="flex-1 pt-px">Current Layer</span><svg width="8" height="5" viewBox="0 0 8 5"><path d="M0 0h8L4 4.500z" fill="#4a4a4a" /></svg></div>
            </div>
            <div className="mt-[7px] flex items-center pl-[5px] text-[13px] tracking-[-0.15px] text-[#b0b0b0]">
              <span className="w-[35px] pt-px">View</span>
              <div className="flex h-6 w-[79px] items-center rounded-[2px] border border-[#c0c0c0] bg-linear-to-b from-[#fafafa] to-[#f0f0f0] pr-[6px] pl-1 text-[#999]"><span className="flex-1 pt-px">Tree</span><svg width="8" height="5" viewBox="0 0 8 5"><path d="M0 0h8L4 4.500z" fill="#a5a5a5" /></svg></div>
            </div>
          </div>
        </div>

        <div className="relative flex h-[30px] shrink-0 items-center pl-1 text-[11px] whitespace-nowrap text-[#111]">
          <div className="flex h-6 w-[212px] shrink-0 items-center rounded-[2px] border border-[#a9a9a9] bg-white pl-2 text-[13px] tracking-[-0.15px] text-[#808080]">
            <svg width="13" height="13" viewBox="0 0 13 13" fill="none" stroke="#808080" strokeWidth="1.200"><circle cx="5" cy="5" r="4.200" /><path d="M8 8l4.500 4.500" /></svg>
            <span className="ml-[7px] pt-px">Type to locate (⌘K)</span>
          </div>
          <span className="ml-2 w-[363px] pt-[2px]">Identifying done.</span>
          <span className="w-[61px] pt-[2px]">Coordinate</span>
          <div className="flex h-[22px] w-[123px] shrink-0 items-center rounded-[2px] border border-[#a9a9a9] bg-white pt-px pl-[6px]">40.4472°, -93.6866°</div>
          <svg width="18" height="18" viewBox="0 0 18 18" fill="none" className="ml-[3px] shrink-0" stroke="#222"><path d="M2 3l3-2 3 4 1-3 3 1-1 4 3 3 1 4-3 2-4-1-3-4-3-2z" fill="#ddd" strokeWidth="1.100" /><path d="M3 5l5 5M5 3l4 6M2 8l6 5M13 5l3-3M15 8l2-1" strokeWidth="1.200" /><circle cx="11" cy="12" r="2" strokeWidth="1.200" /></svg>
          <span className="ml-3 w-8">Scale</span>
          <div className="flex h-[23px] w-[30px] shrink-0 overflow-hidden rounded-[2px] border border-[#a9a9a9] bg-white"><span className="flex w-2 items-center overflow-hidden text-[10px]">7</span><div className="flex flex-1 items-center justify-center border-l border-[#b5b5b5] bg-linear-to-b from-white to-[#f0f0f0]"><svg width="8" height="5" viewBox="0 0 8 5"><path d="M0 0h8L4 4.500z" fill="#4a4a4a" /></svg></div></div>
          <svg width="12" height="15" viewBox="0 0 12 15" fill="none" className="ml-3 shrink-0"><path d="M2.500 7V4.500a3.500 3.500 0 017 0V7" stroke="#777" strokeWidth="1.500" /><rect y="7" width="12" height="8" rx="1" fill="#555" /></svg>
          <span className="ml-[9px] w-[52px] pt-[2px]">Magnifier</span>
          <Spin v="100%" />
          <span className="ml-[9px] w-[53px] pt-[2px]">Rotation</span>
          <Spin v="0.0 °" />
          <div className="ml-[6px]"><Check /></div>
          <span className="ml-[5px] w-[54px] pt-[2px]">Render</span>
          <svg width="15" height="14" viewBox="0 0 15 14" fill="none" className="shrink-0" stroke="#555"><circle cx="7.500" cy="7" r="6.300" fill="#777" /><ellipse cx="7.500" cy="7" rx="3" ry="6.300" stroke="#ddd" strokeWidth=".8" /><path d="M0 7h15" stroke="#666" strokeWidth="1.200" /><path d="M2 4h11M2 10h11M7.500 0v14" stroke="#ddd" strokeWidth=".8" /></svg>
          <span className="ml-[2px] w-[60px] pt-[2px]">EPSG:4269</span>
          <svg width="17" height="15" viewBox="0 0 17 15" className="ml-[22px] shrink-0"><path d="M8.500 0C13 0 16.500 2.500 16.500 6c0 2-.5 3.200-1.500 4.200l.8 4.500-4.500-2.800c-6.500.8-10.800-2-10.800-5.900C.5 2.500 4 0 8.500 0z" fill="#5a5a5a" /></svg>
          <svg width="12" height="12" viewBox="0 0 12 12" className="absolute right-0 bottom-0" fill="none" stroke="#b5b5b5"><path d="M10 1.500h1M7.500 4h4M5 6.500h7M2.500 9h9M0 11.500h11" strokeDasharray="1 1.500" /></svg>
        </div>
      </div>
    </div>
  );
}
